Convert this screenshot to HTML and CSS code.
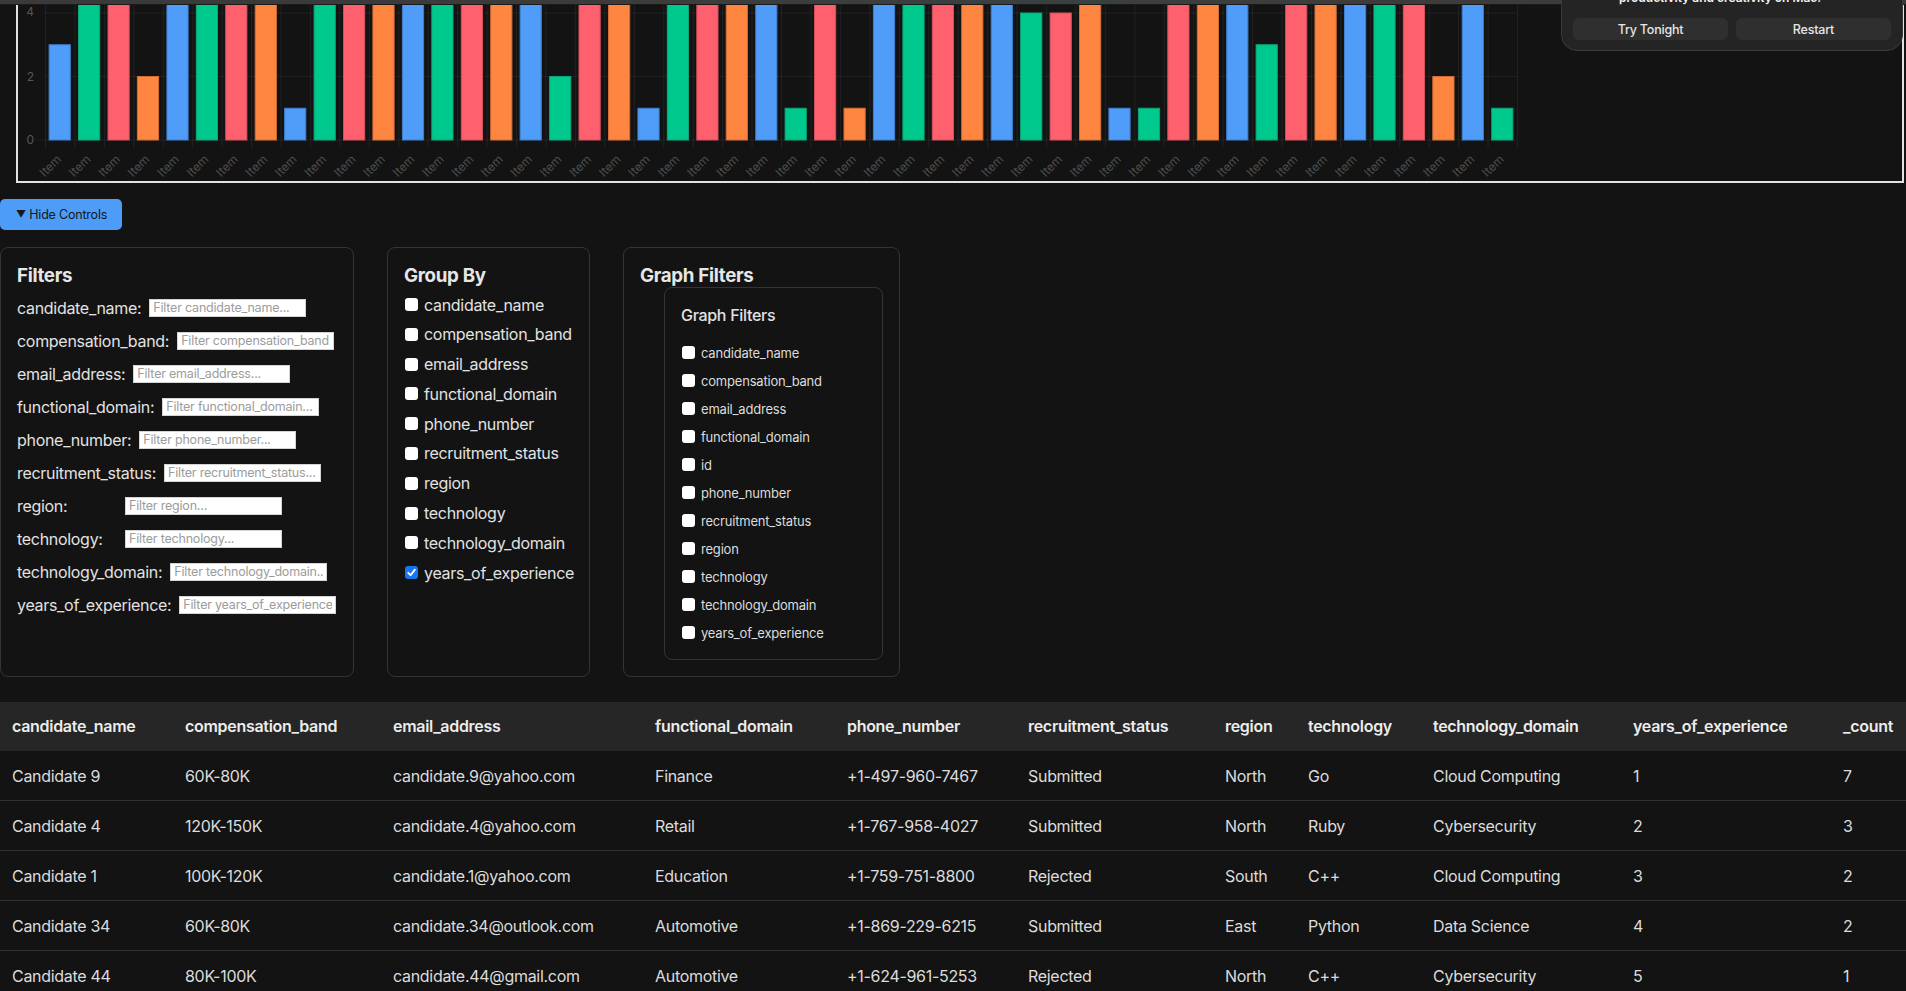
FILE: index.html
```html
<!DOCTYPE html>
<html lang="en">
<head>
<meta charset="utf-8">
<title>Candidates</title>
<link rel="stylesheet" href="styles.css">
</head>
<body>
<div class="topstrip"></div>
<div class="notice">
  <div class="notice-text">productivity and creativity on Mac.</div>
  <div class="notice-actions">
    <span class="notice-btn">Try Tonight</span>
    <span class="notice-btn">Restart</span>
  </div>
</div>

<section class="chart-box">
  <svg class="chart" width="1884" height="181" viewBox="18 0 1884 181" xmlns="http://www.w3.org/2000/svg">
    <defs>
      <pattern id="vgrid" patternUnits="userSpaceOnUse" x="45" y="0" width="29.44" height="148">
        <line x1="0.5" y1="0" x2="0.5" y2="148" class="grid"/>
      </pattern>
    </defs>
    <rect x="45" y="0" width="1473" height="148" fill="url(#vgrid)"/>
    <line x1="45" y1="13" x2="1517" y2="13" class="grid"/>
    <line x1="45" y1="76.5" x2="1517" y2="76.5" class="grid"/>
    <line x1="37" y1="140" x2="1517" y2="140" class="grid"/>
    <text x="34" y="16.3" class="ytick">4</text>
    <text x="34" y="80.8" class="ytick">2</text>
    <text x="34" y="144.3" class="ytick">0</text>
    <g class="bars">
      <rect class="b" x="49.1" y="44.75" width="21.2" height="95.25"/>
      <rect class="g" x="78.5" y="-20" width="21.2" height="160"/>
      <rect class="r" x="108.0" y="-20" width="21.2" height="160"/>
      <rect class="o" x="137.4" y="76.5" width="21.2" height="63.5"/>
      <rect class="b" x="166.9" y="-20" width="21.2" height="160"/>
      <rect class="g" x="196.3" y="-20" width="21.2" height="160"/>
      <rect class="r" x="225.7" y="-20" width="21.2" height="160"/>
      <rect class="o" x="255.2" y="-20" width="21.2" height="160"/>
      <rect class="b" x="284.6" y="108.25" width="21.2" height="31.75"/>
      <rect class="g" x="314.1" y="-20" width="21.2" height="160"/>
      <rect class="r" x="343.5" y="-20" width="21.2" height="160"/>
      <rect class="o" x="372.9" y="-20" width="21.2" height="160"/>
      <rect class="b" x="402.4" y="-20" width="21.2" height="160"/>
      <rect class="g" x="431.8" y="-20" width="21.2" height="160"/>
      <rect class="r" x="461.3" y="-20" width="21.2" height="160"/>
      <rect class="o" x="490.7" y="-20" width="21.2" height="160"/>
      <rect class="b" x="520.1" y="-20" width="21.2" height="160"/>
      <rect class="g" x="549.6" y="76.5" width="21.2" height="63.5"/>
      <rect class="r" x="579.0" y="-20" width="21.2" height="160"/>
      <rect class="o" x="608.5" y="-20" width="21.2" height="160"/>
      <rect class="b" x="637.9" y="108.25" width="21.2" height="31.75"/>
      <rect class="g" x="667.3" y="-20" width="21.2" height="160"/>
      <rect class="r" x="696.8" y="-20" width="21.2" height="160"/>
      <rect class="o" x="726.2" y="-20" width="21.2" height="160"/>
      <rect class="b" x="755.7" y="-20" width="21.2" height="160"/>
      <rect class="g" x="785.1" y="108.25" width="21.2" height="31.75"/>
      <rect class="r" x="814.5" y="-20" width="21.2" height="160"/>
      <rect class="o" x="844.0" y="108.25" width="21.2" height="31.75"/>
      <rect class="b" x="873.4" y="-20" width="21.2" height="160"/>
      <rect class="g" x="902.9" y="-20" width="21.2" height="160"/>
      <rect class="r" x="932.3" y="-20" width="21.2" height="160"/>
      <rect class="o" x="961.7" y="-20" width="21.2" height="160"/>
      <rect class="b" x="991.2" y="-20" width="21.2" height="160"/>
      <rect class="g" x="1020.6" y="13" width="21.2" height="127"/>
      <rect class="r" x="1050.1" y="13" width="21.2" height="127"/>
      <rect class="o" x="1079.5" y="-20" width="21.2" height="160"/>
      <rect class="b" x="1108.9" y="108.25" width="21.2" height="31.75"/>
      <rect class="g" x="1138.4" y="108.25" width="21.2" height="31.75"/>
      <rect class="r" x="1167.8" y="-20" width="21.2" height="160"/>
      <rect class="o" x="1197.3" y="-20" width="21.2" height="160"/>
      <rect class="b" x="1226.7" y="-20" width="21.2" height="160"/>
      <rect class="g" x="1256.1" y="44.75" width="21.2" height="95.25"/>
      <rect class="r" x="1285.6" y="-20" width="21.2" height="160"/>
      <rect class="o" x="1315.0" y="-20" width="21.2" height="160"/>
      <rect class="b" x="1344.5" y="-20" width="21.2" height="160"/>
      <rect class="g" x="1373.9" y="-20" width="21.2" height="160"/>
      <rect class="r" x="1403.3" y="-20" width="21.2" height="160"/>
      <rect class="o" x="1432.8" y="76.5" width="21.2" height="63.5"/>
      <rect class="b" x="1462.2" y="-20" width="21.2" height="160"/>
      <rect class="g" x="1491.7" y="108.25" width="21.2" height="31.75"/>
    </g>
    <g class="xticks">
      <text transform="translate(62.0 160) rotate(-45)">Item</text>
      <text transform="translate(91.4 160) rotate(-45)">Item</text>
      <text transform="translate(120.9 160) rotate(-45)">Item</text>
      <text transform="translate(150.3 160) rotate(-45)">Item</text>
      <text transform="translate(179.8 160) rotate(-45)">Item</text>
      <text transform="translate(209.2 160) rotate(-45)">Item</text>
      <text transform="translate(238.6 160) rotate(-45)">Item</text>
      <text transform="translate(268.1 160) rotate(-45)">Item</text>
      <text transform="translate(297.5 160) rotate(-45)">Item</text>
      <text transform="translate(327.0 160) rotate(-45)">Item</text>
      <text transform="translate(356.4 160) rotate(-45)">Item</text>
      <text transform="translate(385.8 160) rotate(-45)">Item</text>
      <text transform="translate(415.3 160) rotate(-45)">Item</text>
      <text transform="translate(444.7 160) rotate(-45)">Item</text>
      <text transform="translate(474.2 160) rotate(-45)">Item</text>
      <text transform="translate(503.6 160) rotate(-45)">Item</text>
      <text transform="translate(533.0 160) rotate(-45)">Item</text>
      <text transform="translate(562.5 160) rotate(-45)">Item</text>
      <text transform="translate(591.9 160) rotate(-45)">Item</text>
      <text transform="translate(621.4 160) rotate(-45)">Item</text>
      <text transform="translate(650.8 160) rotate(-45)">Item</text>
      <text transform="translate(680.2 160) rotate(-45)">Item</text>
      <text transform="translate(709.7 160) rotate(-45)">Item</text>
      <text transform="translate(739.1 160) rotate(-45)">Item</text>
      <text transform="translate(768.6 160) rotate(-45)">Item</text>
      <text transform="translate(798.0 160) rotate(-45)">Item</text>
      <text transform="translate(827.4 160) rotate(-45)">Item</text>
      <text transform="translate(856.9 160) rotate(-45)">Item</text>
      <text transform="translate(886.3 160) rotate(-45)">Item</text>
      <text transform="translate(915.8 160) rotate(-45)">Item</text>
      <text transform="translate(945.2 160) rotate(-45)">Item</text>
      <text transform="translate(974.6 160) rotate(-45)">Item</text>
      <text transform="translate(1004.1 160) rotate(-45)">Item</text>
      <text transform="translate(1033.5 160) rotate(-45)">Item</text>
      <text transform="translate(1063.0 160) rotate(-45)">Item</text>
      <text transform="translate(1092.4 160) rotate(-45)">Item</text>
      <text transform="translate(1121.8 160) rotate(-45)">Item</text>
      <text transform="translate(1151.3 160) rotate(-45)">Item</text>
      <text transform="translate(1180.7 160) rotate(-45)">Item</text>
      <text transform="translate(1210.2 160) rotate(-45)">Item</text>
      <text transform="translate(1239.6 160) rotate(-45)">Item</text>
      <text transform="translate(1269.0 160) rotate(-45)">Item</text>
      <text transform="translate(1298.5 160) rotate(-45)">Item</text>
      <text transform="translate(1327.9 160) rotate(-45)">Item</text>
      <text transform="translate(1357.4 160) rotate(-45)">Item</text>
      <text transform="translate(1386.8 160) rotate(-45)">Item</text>
      <text transform="translate(1416.2 160) rotate(-45)">Item</text>
      <text transform="translate(1445.7 160) rotate(-45)">Item</text>
      <text transform="translate(1475.1 160) rotate(-45)">Item</text>
      <text transform="translate(1504.6 160) rotate(-45)">Item</text>
    </g>
  </svg>
</section>

<button class="toggle" type="button"><span class="toggle-arrow">▼</span> Hide Controls</button>

<div class="controls">
  <div class="panel panel-filters">
    <h3 class="panel-title">Filters</h3>
    <div class="flist">
      <div class="frow"><label>candidate_name:</label><input type="text" placeholder="Filter candidate_name..."></div>
      <div class="frow"><label>compensation_band:</label><input type="text" placeholder="Filter compensation_band..."></div>
      <div class="frow"><label>email_address:</label><input type="text" placeholder="Filter email_address..."></div>
      <div class="frow"><label>functional_domain:</label><input type="text" placeholder="Filter functional_domain..."></div>
      <div class="frow"><label>phone_number:</label><input type="text" placeholder="Filter phone_number..."></div>
      <div class="frow"><label>recruitment_status:</label><input type="text" placeholder="Filter recruitment_status..."></div>
      <div class="frow"><label>region:</label><input type="text" placeholder="Filter region..."></div>
      <div class="frow"><label>technology:</label><input type="text" placeholder="Filter technology..."></div>
      <div class="frow"><label>technology_domain:</label><input type="text" placeholder="Filter technology_domain..."></div>
      <div class="frow"><label>years_of_experience:</label><input type="text" placeholder="Filter years_of_experience..."></div>
    </div>
  </div>

  <div class="panel panel-group">
    <h3 class="panel-title">Group By</h3>
    <div class="cblist">
      <label class="cbrow"><input type="checkbox">candidate_name</label>
      <label class="cbrow"><input type="checkbox">compensation_band</label>
      <label class="cbrow"><input type="checkbox">email_address</label>
      <label class="cbrow"><input type="checkbox">functional_domain</label>
      <label class="cbrow"><input type="checkbox">phone_number</label>
      <label class="cbrow"><input type="checkbox">recruitment_status</label>
      <label class="cbrow"><input type="checkbox">region</label>
      <label class="cbrow"><input type="checkbox">technology</label>
      <label class="cbrow"><input type="checkbox">technology_domain</label>
      <label class="cbrow"><input type="checkbox" checked>years_of_experience</label>
    </div>
  </div>

  <div class="panel panel-graph">
    <h3 class="panel-title">Graph Filters</h3>
    <div class="gf-inner">
      <h4 class="gf-title">Graph Filters</h4>
      <div class="gflist">
        <label class="gfrow"><input type="checkbox">candidate_name</label>
        <label class="gfrow"><input type="checkbox">compensation_band</label>
        <label class="gfrow"><input type="checkbox">email_address</label>
        <label class="gfrow"><input type="checkbox">functional_domain</label>
        <label class="gfrow"><input type="checkbox">id</label>
        <label class="gfrow"><input type="checkbox">phone_number</label>
        <label class="gfrow"><input type="checkbox">recruitment_status</label>
        <label class="gfrow"><input type="checkbox">region</label>
        <label class="gfrow"><input type="checkbox">technology</label>
        <label class="gfrow"><input type="checkbox">technology_domain</label>
        <label class="gfrow"><input type="checkbox">years_of_experience</label>
      </div>
    </div>
  </div>
</div>

<table class="data">
  <colgroup>
    <col class="w1"><col class="w2"><col class="w3"><col class="w4"><col class="w5"><col class="w6"><col class="w7"><col class="w8"><col class="w9"><col class="w10"><col class="w11">
  </colgroup>
  <thead>
    <tr><th>candidate_name</th><th>compensation_band</th><th>email_address</th><th>functional_domain</th><th>phone_number</th><th>recruitment_status</th><th>region</th><th>technology</th><th>technology_domain</th><th>years_of_experience</th><th>_count</th></tr>
  </thead>
  <tbody>
    <tr><td>Candidate 9</td><td>60K-80K</td><td>candidate.9@yahoo.com</td><td>Finance</td><td>+1-497-960-7467</td><td>Submitted</td><td>North</td><td>Go</td><td>Cloud Computing</td><td>1</td><td>7</td></tr>
    <tr><td>Candidate 4</td><td>120K-150K</td><td>candidate.4@yahoo.com</td><td>Retail</td><td>+1-767-958-4027</td><td>Submitted</td><td>North</td><td>Ruby</td><td>Cybersecurity</td><td>2</td><td>3</td></tr>
    <tr><td>Candidate 1</td><td>100K-120K</td><td>candidate.1@yahoo.com</td><td>Education</td><td>+1-759-751-8800</td><td>Rejected</td><td>South</td><td>C++</td><td>Cloud Computing</td><td>3</td><td>2</td></tr>
    <tr><td>Candidate 34</td><td>60K-80K</td><td>candidate.34@outlook.com</td><td>Automotive</td><td>+1-869-229-6215</td><td>Submitted</td><td>East</td><td>Python</td><td>Data Science</td><td>4</td><td>2</td></tr>
    <tr><td>Candidate 44</td><td>80K-100K</td><td>candidate.44@gmail.com</td><td>Automotive</td><td>+1-624-961-5253</td><td>Rejected</td><td>North</td><td>C++</td><td>Cybersecurity</td><td>5</td><td>1</td></tr>
  </tbody>
</table>
</body>
</html>
```

FILE: styles.css
```css
html, body {
  margin: 0;
  padding: 0;
  overflow: hidden;
}

body {
  position: relative;
  background: #131313;
  color: #e2e2e2;
  font-family: Inter, "Noto Sans", "Liberation Sans", sans-serif;
  font-size: 16px;
  letter-spacing: -0.3px;
}

.topstrip {
  position: absolute;
  top: 0;
  left: 0;
  right: 0;
  height: 4px;
  background: linear-gradient(90deg, #3a3a3a 0%, #3d3b3a 30%, #3a4040 55%, #3e3b3a 75%, #3a3a3a 100%);
  border-bottom: 1px solid #1b1b1b;
  z-index: 5;
}

.notice {
  position: absolute;
  top: -29px;
  right: 3px;
  width: 342px;
  box-sizing: border-box;
  padding: 18px 11px 10px;
  background: #242424;
  border: 1px solid #3a3a3a;
  border-radius: 16px;
  z-index: 10;
  letter-spacing: 0;
}

.notice-text {
  margin-left: 46px;
  font-size: 12px;
  font-weight: 600;
  line-height: 16px;
  color: #f2f2f2;
  white-space: nowrap;
}

.notice-actions {
  display: flex;
  gap: 8px;
  margin-top: 12px;
}

.notice-btn {
  flex: 1;
  height: 22px;
  display: flex;
  align-items: center;
  justify-content: center;
  background: #2f2f2f;
  border-radius: 6px;
  font-size: 12.5px;
  font-weight: 500;
  letter-spacing: -0.2px;
  color: #e6e6e6;
}

/* chart */
.chart-box {
  margin: 0 2px 0 16px;
  height: 181px;
  border: 2px solid #e2e2e2;
  border-top: none;
  overflow: hidden;
}

.chart {
  display: block;
  letter-spacing: 0;
}

.chart .grid {
  stroke: rgba(255, 255, 255, 0.055);
  stroke-width: 1;
}

.chart .ytick {
  font-family: Inter, "Liberation Sans", sans-serif;
  font-size: 12px;
  fill: #575757;
  text-anchor: end;
}

.chart .xticks text {
  font-family: Inter, "Liberation Sans", sans-serif;
  font-size: 12px;
  fill: #4e4e4e;
  text-anchor: end;
}

.bars rect {
  stroke-width: 1;
}

.bars .b { fill: #4f9cf9; stroke: #3f7fcc; }
.bars .g { fill: #00c98e; stroke: #0aa578; }
.bars .r { fill: #ff606e; stroke: #d0505c; }
.bars .o { fill: #ff8640; stroke: #d26e36; }

/* toggle */
.toggle {
  display: block;
  margin-top: 16px;
  width: 122px;
  height: 31px;
  padding: 0 0 0 16px;
  text-align: left;
  border: none;
  border-radius: 5px;
  background: #4d9cf7;
  color: #141820;
  font-family: Inter, "Liberation Sans", sans-serif;
  font-size: 12.5px;
  letter-spacing: -0.2px;
}

.toggle-arrow {
  font-size: 10px;
  vertical-align: 1px;
}

/* controls */
.controls {
  display: flex;
  gap: 33px;
  margin-top: 17px;
  align-items: stretch;
}

.panel {
  box-sizing: border-box;
  border: 1px solid #343434;
  border-radius: 8px;
  padding: 16px;
}

.panel-filters { width: 354px; }
.panel-group { width: 203px; }
.panel-graph { width: 277px; }

.panel-title {
  margin: 0;
  font-size: 18.72px;
  font-weight: 700;
  line-height: normal;
  color: #e6e6e6;
}

.flist {
  display: flex;
  flex-direction: column;
  gap: 8px;
  padding-top: 8px;
}

.frow {
  display: flex;
  align-items: center;
  height: 25px;
  white-space: nowrap;
}

.frow label {
  min-width: 100px;
  margin-right: 8px;
  font-size: 16px;
  color: #e2e2e2;
}

.frow input {
  width: 157px;
  height: 18px;
  box-sizing: border-box;
  margin: 0;
  padding: 0 3px;
  border: 1px solid #d4d4d4;
  background: #ffffff;
  font-family: Inter, "Liberation Sans", sans-serif;
  font-size: 12.5px;
  letter-spacing: -0.2px;
  color: #222;
}

.frow input::placeholder {
  color: #9c9c9c;
}

.cblist {
  display: flex;
  flex-direction: column;
  gap: 7.8px;
  padding-top: 6.5px;
}

.cbrow {
  display: flex;
  align-items: center;
  height: 22px;
  font-size: 16px;
  white-space: nowrap;
  color: #e2e2e2;
}

input[type="checkbox"] {
  appearance: none;
  -webkit-appearance: none;
  width: 13px;
  height: 13px;
  margin: 0 6.5px 0 0.5px;
  flex: none;
  background: #ffffff;
  border-radius: 3px;
  border: none;
}

input[type="checkbox"]:checked {
  background-color: #1a74f2;
  background-image: url("data:image/svg+xml;utf8,<svg xmlns='http://www.w3.org/2000/svg' viewBox='0 0 13 13'><path d='M3.2 6.8 L5.6 9.2 L9.9 3.6' fill='none' stroke='white' stroke-width='1.8' stroke-linecap='round' stroke-linejoin='round'/></svg>");
  background-size: 13px 13px;
}

.gf-inner {
  margin-left: 24px;
  border: 1px solid #343434;
  border-radius: 8px;
  padding: 17px 16px 16px;
}

.gf-title {
  margin: 0 0 17.5px;
  font-size: 16px;
  font-weight: 500;
  line-height: normal;
  color: #e2e2e2;
}

.gflist {
  display: flex;
  flex-direction: column;
  gap: 8px;
}

.gfrow {
  display: flex;
  align-items: center;
  height: 20px;
  font-size: 13px;
  letter-spacing: -0.2px;
  white-space: nowrap;
  color: #dcdcdc;
}

/* table */
.data {
  margin-top: 25px;
  width: 1906px;
  table-layout: fixed;
  border-collapse: separate;
  border-spacing: 0;
}

.w1 { width: 173px; }
.w2 { width: 208px; }
.w3 { width: 262px; }
.w4 { width: 192px; }
.w5 { width: 181px; }
.w6 { width: 197px; }
.w7 { width: 83px; }
.w8 { width: 125px; }
.w9 { width: 200px; }
.w10 { width: 210px; }
.w11 { width: 75px; }

.data th {
  background: #262626;
  padding: 14px 12px 15px;
  line-height: 20px;
  font-size: 16px;
  font-weight: 600;
  text-align: left;
  white-space: nowrap;
  color: #ececec;
}

.data td {
  padding: 15px 12px 14px;
  line-height: 20px;
  font-size: 16px;
  white-space: nowrap;
  color: #dcdcdc;
  border-bottom: 1px solid #2f2f2f;
}
```
